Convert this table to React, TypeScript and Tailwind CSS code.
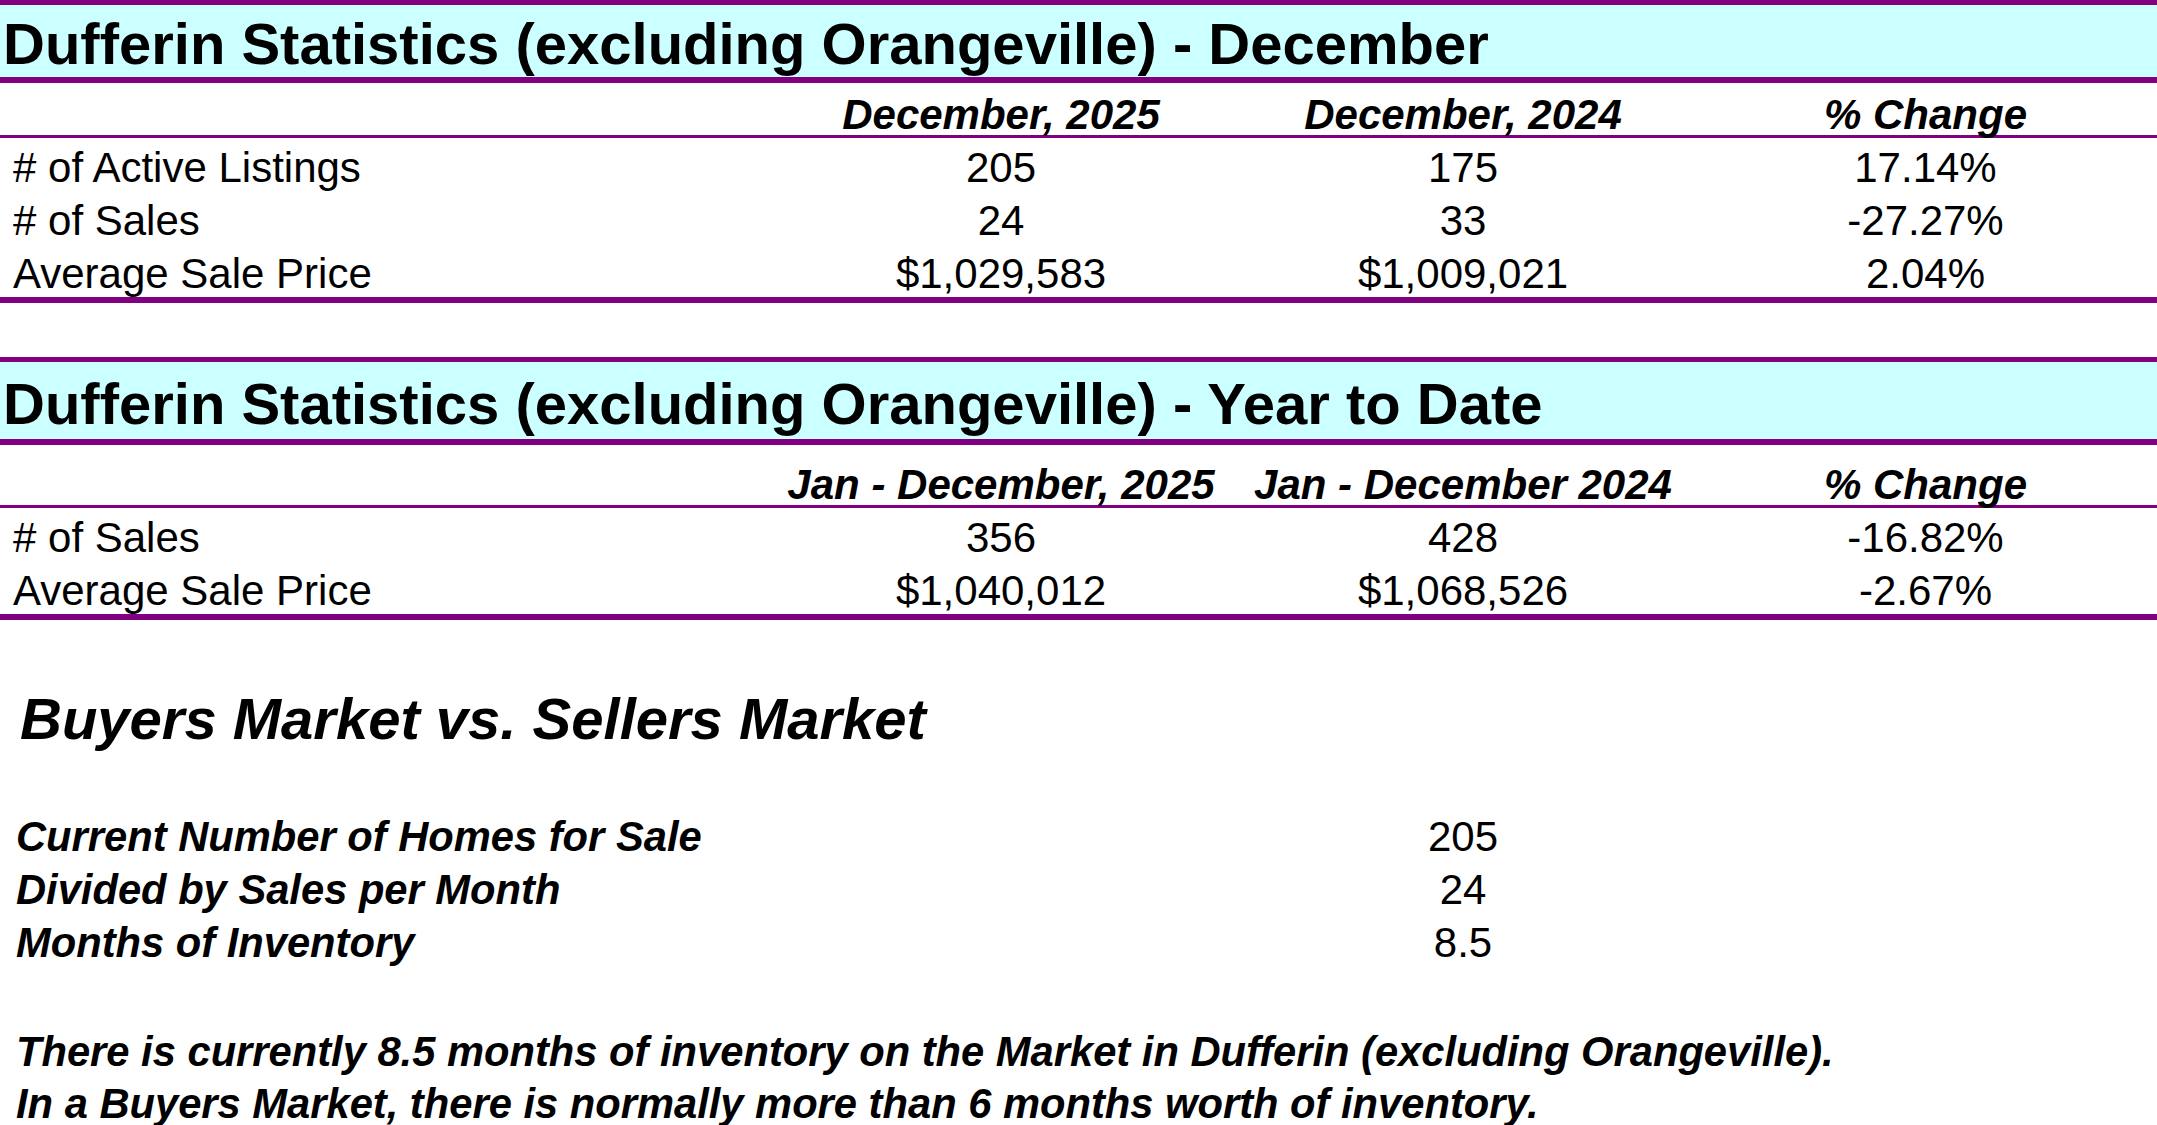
import React from "react";

const cols = "grid grid-cols-[770px_462px_462px_463px]";

function TitleBar({ text, h }: { text: string; h: string }) {
  return (
    <div className={`border-t-[5px] border-b-[6px] border-[#800080] bg-[#ccffff] ${h} flex items-center pl-[3px] pt-[6px]`}>
      <span className="text-[58px] font-bold leading-none text-black whitespace-nowrap">{text}</span>
    </div>
  );
}

function HeaderRow({ h, labels }: { h: string; labels: string[] }) {
  return (
    <div className={`${cols} ${h} items-end`}>
      <div />
      {labels.map((l) => (
        <div key={l} className="text-center text-[42px] font-bold italic leading-[40px] whitespace-nowrap">
          {l}
        </div>
      ))}
    </div>
  );
}

function DataRow({ cells }: { cells: string[] }) {
  return (
    <div className={`${cols} h-[53px] pt-[6px] items-center text-[42px] leading-[46px]`}>
      <div className="pl-[13px] whitespace-nowrap">{cells[0]}</div>
      <div className="text-center">{cells[1]}</div>
      <div className="text-center">{cells[2]}</div>
      <div className="text-center">{cells[3]}</div>
    </div>
  );
}

export default function App() {
  return (
    <div className="w-[2157px] h-[1125px] bg-white text-black overflow-hidden font-['Liberation_Sans',Arial,sans-serif]">
      <TitleBar h="h-[83px]" text="Dufferin Statistics (excluding Orangeville) - December" />
      <HeaderRow h="h-[52px]" labels={["December, 2025", "December, 2024", "% Change"]} />
      <div className="h-[3px] bg-[#800080]" />
      <DataRow cells={["# of Active Listings", "205", "175", "17.14%"]} />
      <DataRow cells={["# of Sales", "24", "33", "-27.27%"]} />
      <DataRow cells={["Average Sale Price", "$1,029,583", "$1,009,021", "2.04%"]} />
      <div className="h-[6px] bg-[#800080]" />

      <div className="h-[54px]" />

      <TitleBar h="h-[88px]" text="Dufferin Statistics (excluding Orangeville) - Year to Date" />
      <HeaderRow h="h-[60px]" labels={["Jan - December, 2025", "Jan - December 2024", "% Change"]} />
      <div className="h-[3px] bg-[#800080]" />
      <DataRow cells={["# of Sales", "356", "428", "-16.82%"]} />
      <DataRow cells={["Average Sale Price", "$1,040,012", "$1,068,526", "-2.67%"]} />
      <div className="h-[6px] bg-[#800080]" />

      <div className="mt-[66px] pl-[20px] text-[58px] font-bold italic leading-[66px] whitespace-nowrap">
        Buyers Market vs. Sellers Market
      </div>

      <div className="mt-[58px] flex flex-col font-bold italic text-[41.7px] leading-[46px]">
        {[
          ["Current Number of Homes for Sale", "205"],
          ["Divided by Sales per Month", "24"],
          ["Months of Inventory", "8.5"],
        ].map(([a, b]) => (
          <div key={a} className="grid grid-cols-[1232px_462px] h-[53px] items-center">
            <div className="pl-[16px] whitespace-nowrap">{a}</div>
            <div className="text-center font-normal not-italic text-[42px]">{b}</div>
          </div>
        ))}
      </div>

      <div className="mt-[56px] pl-[16px] flex flex-col font-bold italic text-[41.7px] leading-[42px] whitespace-nowrap">
        <div className="h-[53px] flex items-center">
          There is currently 8.5 months of inventory on the Market in Dufferin (excluding Orangeville).
        </div>
        <div className="h-[51px] flex items-center">
          In a Buyers Market, there is normally more than 6 months worth of inventory.
        </div>
      </div>
    </div>
  );
}
